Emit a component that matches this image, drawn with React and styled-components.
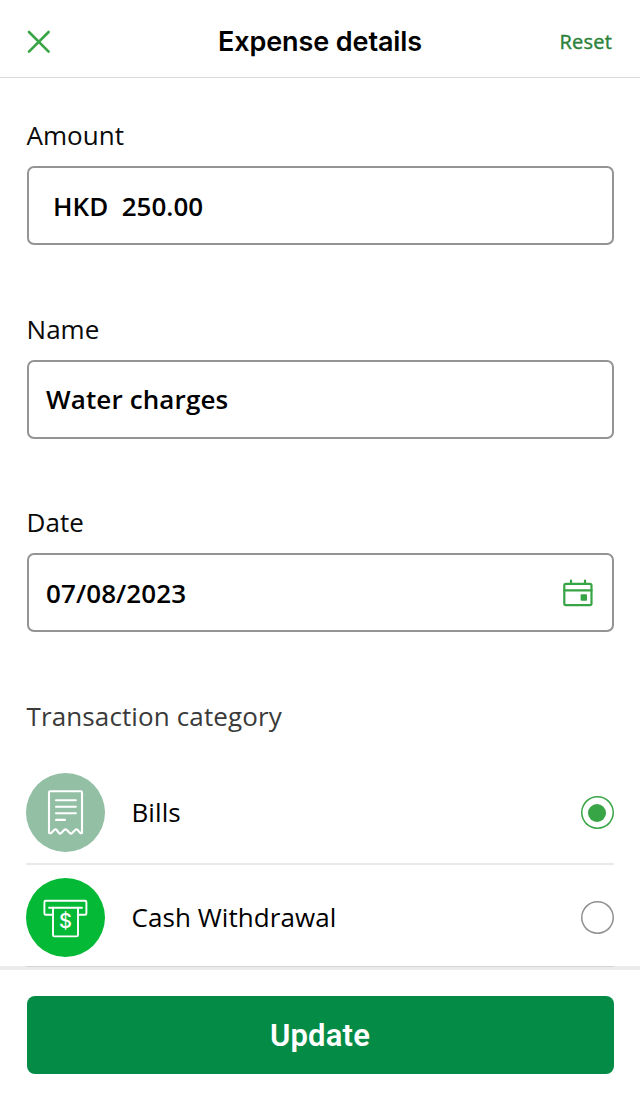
import { useState } from "react";
import styled, { createGlobalStyle } from "styled-components";

const CATEGORIES = [
  { id: "bills", label: "Bills", color: "#93bfa5", Icon: BillIcon },
  { id: "cash", label: "Cash Withdrawal", color: "#04b936", Icon: CashIcon },
];

function CloseIcon() {
  return (
    <svg width="24" height="24" viewBox="0 0 24 24" fill="none">
      <path
        d="M2 2L21.6 21.6M21.6 2L2 21.6"
        stroke="#37a445"
        strokeWidth="2.6"
        strokeLinecap="round"
      />
    </svg>
  );
}

function CalendarIcon() {
  return (
    <svg width="30" height="28" viewBox="0 0 30 28" fill="none">
      <g stroke="#37a445" strokeWidth="2.2">
        <rect x="1.3" y="4.8" width="27.2" height="21.4" rx="1.6" />
        <path d="M1.3 11.4H28.5M8 5V1.6M22 5V1.6" strokeLinecap="round" />
      </g>
      <rect x="17.6" y="15.3" width="6.4" height="6.4" rx="1" fill="#37a445" />
    </svg>
  );
}

function BillIcon() {
  return (
    <svg width="79" height="79" viewBox="0 0 79 79" fill="none">
      <g
        stroke="#fff"
        strokeWidth="2.1"
        strokeLinecap="round"
        strokeLinejoin="round"
      >
        <path d="M23 60V19.5Q23 18.3 24.2 18.3H54.8Q56 18.3 56 19.5V60L54.6 60.2L51.4 56.8Q50.4 55.8 49.4 56.8L46 60.2Q45 61 44 60.2L40.6 56.8Q39.5 55.8 38.4 56.8L35 60.2Q34 61 33 60.2L30.6 56.8Q29.5 55.8 28.4 56.8L25 60.2Z" />
        <path d="M30 27.3H49.8M30 33.8H49.8M30 40.3H49.8M30 46.9H39" />
      </g>
    </svg>
  );
}

function CashIcon() {
  return (
    <svg width="79" height="79" viewBox="0 0 79 79" fill="none">
      <g
        stroke="#fff"
        strokeWidth="1.9"
        strokeLinecap="round"
        strokeLinejoin="round"
      >
        <path d="M27 36.8H19.8Q18.4 36.8 18.4 35.4V24.2Q18.4 22.8 19.8 22.8H59Q60.4 22.8 60.4 24.2V35.4Q60.4 36.8 59 36.8H52" />
        <path d="M23 29.7H56" />
        <path d="M27 29.7V57Q27 58.4 28.4 58.4H50.6Q52 58.4 52 57V29.7" />
      </g>
      <Dollar x="39.5" y="50.3" textAnchor="middle">
        $
      </Dollar>
    </svg>
  );
}

function App() {
  const [category, setCategory] = useState("bills");

  return (
    <Screen>
      <GlobalStyle />
      <Header>
        <CloseButton aria-label="Close">
          <CloseIcon />
        </CloseButton>
        <Title>Expense details</Title>
        <ResetButton>Reset</ResetButton>
      </Header>

      <Content>
        <Field>
          <Label>Amount</Label>
          <InputBox $indent={24.5}>
            <Currency>HKD</Currency>
            <Value>250.00</Value>
          </InputBox>
        </Field>
        <Field>
          <Label>Name</Label>
          <InputBox>
            <Value $spacing={0.13}>Water charges</Value>
          </InputBox>
        </Field>
        <Field>
          <Label>Date</Label>
          <InputBox>
            <Value $spacing={0.1}>07/08/2023</Value>
            <CalendarIcon />
          </InputBox>
        </Field>

        <Label $muted>Transaction category</Label>
        <CategoryList>
          {CATEGORIES.map(({ id, label, color, Icon }) => (
            <CategoryRow key={id} onClick={() => setCategory(id)}>
              <Badge $color={color}>
                <Icon />
              </Badge>
              <CategoryName>{label}</CategoryName>
              <Radio $checked={category === id} />
            </CategoryRow>
          ))}
        </CategoryList>
      </Content>

      <Footer>
        <UpdateButton>Update</UpdateButton>
      </Footer>
    </Screen>
  );
}

export default App;

const GlobalStyle = createGlobalStyle`
  * {
    box-sizing: border-box;
  }

  body {
    margin: 0;
    background: #fff;
    color: #000;
    font-family: "Open Sans", "Noto Sans", sans-serif;
  }

  button {
    padding: 0;
    border: 0;
    background: none;
    font-family: inherit;
    cursor: pointer;
  }
`;

const Screen = styled.div`
  display: flex;
  flex-direction: column;
  width: 640px;
  height: 1100px;
  overflow: hidden;
`;

const Header = styled.header`
  display: grid;
  grid-template-columns: 100px 1fr 100px;
  align-items: center;
  flex: none;
  height: 78px;
  padding: 7px 28px 0 27px;
  border-bottom: 1px solid #d9d9d9;
`;

const CloseButton = styled.button`
  display: flex;
`;

const Title = styled.h1`
  margin: 0;
  padding-left: 1px;
  font-family: Inter, "Liberation Sans", sans-serif;
  font-size: 27px;
  font-weight: 600;
  letter-spacing: -0.1px;
  line-height: 36px;
  text-align: center;
  white-space: nowrap;
`;

const ResetButton = styled.button`
  color: #2b8238;
  font-size: 20px;
  font-weight: 500;
  letter-spacing: 0.2px;
  line-height: 28px;
  text-align: right;
  -webkit-text-stroke: 0.4px #2b8238;
`;

/* sits above the footer so the last divider stays visible on its top edge */
const Content = styled.main`
  position: relative;
  flex: 1;
  min-height: 0;
  padding: 39px 26.5px 0;
`;

const Field = styled.div`
  height: 193.5px;
`;

const Label = styled.div`
  color: ${({ $muted }) => ($muted ? "#3a3a3a" : "#0a0a0a")};
  font-size: 26px;
  letter-spacing: ${({ $muted }) => ($muted ? "0.12px" : "0.05px")};
  line-height: 36px;
`;

const InputBox = styled.div`
  display: flex;
  align-items: center;
  height: 79px;
  margin-top: 13px;
  padding: 0 19px 0 ${({ $indent = 17.5 }) => $indent}px;
  border: 2px solid #949494;
  border-radius: 7px;
`;

const Value = styled.span`
  flex: 1;
  font-size: 26px;
  font-weight: 600;
  letter-spacing: ${({ $spacing = 0 }) => $spacing}px;
  line-height: 36px;
`;

const Currency = styled(Value)`
  flex: none;
  margin-right: 13.5px;
`;

const CategoryList = styled.div`
  margin: 26.5px 0 0 -0.5px;
`;

const CategoryRow = styled.div`
  display: flex;
  align-items: center;
  height: 105px;
  padding-top: 2px;
  border-bottom: 2px solid #e9e9e9;

  &:last-child {
    height: 102px;
    padding-top: 4px;
    border-bottom: 1px solid #d4d4d4;
  }
`;

const Badge = styled.span`
  display: flex;
  flex: none;
  width: 79px;
  height: 79px;
  border-radius: 50%;
  background: ${({ $color }) => $color};
`;

const Dollar = styled.text`
  fill: #fff;
  font-family: Inter, "Liberation Sans", sans-serif;
  font-size: 20px;
  font-weight: 500;
`;

const CategoryName = styled.span`
  flex: 1;
  margin-left: 26.5px;
  padding-bottom: 1px;
  font-size: 26px;
  letter-spacing: 0.07px;
  line-height: 36px;
`;

const Radio = styled.span`
  display: flex;
  align-items: center;
  justify-content: center;
  width: 33px;
  height: 33px;
  border-radius: 50%;
  box-shadow: inset 0 0 0 1.5px
    ${({ $checked }) => ($checked ? "#37a445" : "#8f8f8f")};

  &::after {
    content: "";
    width: 18px;
    height: 18px;
    border-radius: 50%;
    background: ${({ $checked }) => ($checked ? "#37a445" : "transparent")};
  }
`;

const Footer = styled.footer`
  flex: none;
  height: 134px;
  padding: 26px 26.5px 0;
  border-top: 4px solid #ebebeb;
`;

const UpdateButton = styled.button`
  width: 100%;
  height: 78px;
  padding-top: 2px;
  border-radius: 8px;
  background: #048b46;
  color: #fff;
  font-family: Roboto, "Liberation Sans", sans-serif;
  font-size: 31px;
  font-weight: 600;
  letter-spacing: 0.2px;
  line-height: 40px;
`;
